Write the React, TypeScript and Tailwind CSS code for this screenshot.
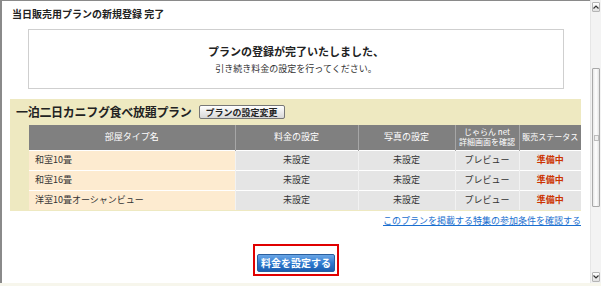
const font = "font-['Noto_Sans_CJK_JP','Noto_Sans',sans-serif]";

const rooms = ["和室10畳", "和室16畳", "洋室10畳オーシャンビュー"];

export default function App() {
  return (
    <div className={`w-[601px] h-[286px] overflow-hidden bg-white flex flex-col ${font}`}>
      <div className="flex flex-1 min-h-0">
        <div className="flex-1 border-l-2 border-t border-[#8a8a8a] flex flex-col text-[#222]">
          <h1 className="pl-[10px] pt-[6px] h-[28px] text-[10px] font-bold leading-[14px]">
            当日販売用プランの新規登録 完了
          </h1>

          <div className="mx-[26px] h-[60px] border border-[#cfcfcf] flex flex-col items-center justify-center">
            <p className="text-[11px] font-bold leading-[14px]">プランの登録が完了いたしました、</p>
            <p className="mt-[5px] text-[9px] leading-[12px] text-[#333]">引き続き料金の設定を行ってください。</p>
          </div>

          <section className="ml-[8px] mr-[9px] mt-[10px] bg-[#eee9c1] pb-[1px]">
            <div className="h-[26px] flex items-center pl-[6px] gap-[7px]">
              <span className="text-[12px] font-bold leading-none tracking-[-0.3px]">一泊二日カニフグ食べ放題プラン</span>
              <button className="h-[14px] px-[6px] text-[9px] font-bold leading-none border border-[#777] rounded-[2px] bg-gradient-to-b from-white to-[#d8d8d8] text-[#222]">
                プランの設定変更
              </button>
            </div>
            <div className="ml-[19px]">
              <RoomTable />
            </div>
          </section>

          <div className="mr-[9px] mt-[4px] flex justify-end">
            <a className="text-[9px] leading-[12px] text-[#1a6fd0] underline">
              このプランを掲載する特集の参加条件を確認する
            </a>
          </div>

          <div className="mt-[17px] flex justify-center">
            <div className="border-2 border-[#e00000] p-[2px]">
              <button className="w-[78px] h-[18px] rounded-[2px] bg-gradient-to-b from-[#6aa6e6] via-[#2f7bd0] to-[#1c5eb0] text-white text-[10px] font-bold leading-none border border-[#2a5f9e]">
                料金を設定する
              </button>
            </div>
          </div>
        </div>
        <Scrollbar />
      </div>
      <div className="h-[3px] bg-[#f7f6ec]" />
    </div>
  );
}

function RoomTable() {
  return (
    <table className="w-full table-fixed border-collapse text-[9px] leading-[12px]">
      <thead>
        <tr className="bg-[#808080] text-white h-[25px]">
          <th className="w-[206px] font-normal border-r border-[#a6a6a6]">部屋タイプ名</th>
          <th className="w-[123px] font-normal border-r border-[#a6a6a6]">料金の設定</th>
          <th className="w-[97px] font-normal border-r border-[#a6a6a6]">写真の設定</th>
          <th className="w-[64px] font-normal border-r border-[#a6a6a6] text-[8px] leading-[10px] whitespace-nowrap">
            じゃらん net
            <br />
            詳細画面を確認
          </th>
          <th className="font-normal text-[8px] whitespace-nowrap">販売ステータス</th>
        </tr>
      </thead>
      <tbody>
        {rooms.map((r) => (
          <tr key={r} className="h-[20px] border-t border-white">
            <td className="bg-[#fdebd0] pl-[6px] text-[#333]">{r}</td>
            <td className="bg-[#e5e5e5] text-center border-l border-[#f2f2f2] text-[#333]">未設定</td>
            <td className="bg-[#e5e5e5] text-center border-l border-[#f2f2f2] text-[#333]">未設定</td>
            <td className="bg-[#e5e5e5] text-center border-l border-[#f2f2f2] text-[#333]">プレビュー</td>
            <td className="bg-[#e5e5e5] text-center border-l border-[#f2f2f2] text-[#cc3300] font-bold">準備中</td>
          </tr>
        ))}
      </tbody>
    </table>
  );
}

function Scrollbar() {
  return (
    <div className="w-[11px] bg-[#f3f3f3] border-l border-[#e6e6e6] flex flex-col pt-[2px] pb-[1px]">
      <div className="h-[10px] mx-[1px] border border-[#b5b5b5] rounded-[1px] bg-gradient-to-b from-white to-[#e0e0e0] flex items-center justify-center">
        <svg width="6" height="4" viewBox="0 0 6 4">
          <path d="M0.5 3.5 L3 1 L5.5 3.5" stroke="#333" strokeWidth="1.2" fill="none" />
        </svg>
      </div>
      <div className="h-[56px]" />
      <div className="h-[139px] mx-[1px] border border-[#a9a9a9] rounded-[1px] bg-gradient-to-r from-[#e8e8e8] via-white to-[#e4e4e4] flex items-center justify-center">
        <div className="w-[5px] h-[6px] border border-[#bdbdbd] bg-[#efefef]" />
      </div>
      <div className="flex-1" />
      <div className="h-[10px] mx-[1px] border border-[#b5b5b5] rounded-[1px] bg-gradient-to-b from-white to-[#e0e0e0] flex items-center justify-center">
        <svg width="6" height="4" viewBox="0 0 6 4">
          <path d="M0.5 0.5 L3 3 L5.5 0.5" stroke="#333" strokeWidth="1.2" fill="none" />
        </svg>
      </div>
    </div>
  );
}
